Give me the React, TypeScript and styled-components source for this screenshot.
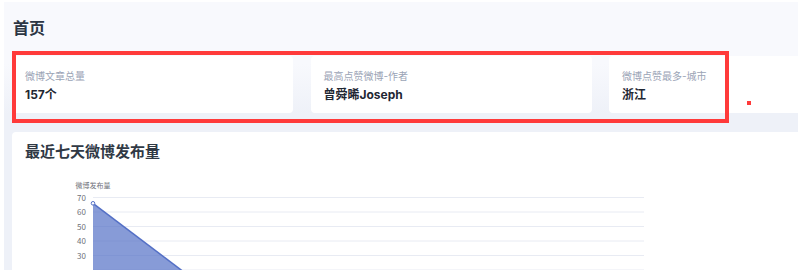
import styled, { createGlobalStyle } from 'styled-components';

const GlobalStyle = createGlobalStyle`
	html, body {
		margin: 0;
		padding: 0;
		background: #fff;
	}
	body {
		font-family: "Inter", "Noto Sans CJK SC", sans-serif;
		overflow: hidden;
	}
`;

const Page = styled.div`
	position: relative;
	width: 809px;
	height: 270px;
	padding: 2px 11px 0 4px;
	box-sizing: border-box;
	overflow: hidden;
`;

const Main = styled.main`
	height: 100%;
	padding: 14px 0 0 8px;
	box-sizing: border-box;
	overflow: hidden;
	background: linear-gradient(180deg, #f8f9fd 0, #f8f9fd 62px, #eef1f8 112px, #eef1f8 100%);
`;

const PageTitle = styled.h1`
	margin: 0 0 16px 1px;
	font-size: 16px;
	line-height: 24px;
	font-weight: 700;
	color: #2c3644;
`;

const StatRow = styled.div`
	display: grid;
	grid-template-columns: repeat(3, 281px);
	column-gap: 17.5px;
	margin-bottom: 19px;
`;

const StatCard = styled.div`
	background: #fff;
	border-radius: 4px;
	padding: 12px 13px 9px;
	height: 57px;
	box-sizing: border-box;
`;

const StatLabel = styled.div`
	font-size: 10px;
	line-height: 16px;
	color: #9ba4b6;
	margin-bottom: 2px;
`;

const StatValue = styled.div`
	font-size: 12px;
	line-height: 18px;
	font-weight: 700;
	color: #1f2733;
`;

const ChartCard = styled.section`
	background: #fff;
	border-radius: 4px 0 0 0;
	padding: 10px 13px 0;
	height: 200px;
	box-sizing: border-box;
`;

const ChartTitle = styled.h2`
	margin: 0;
	font-size: 15px;
	line-height: 20px;
	font-weight: 700;
	color: #303945;
`;

const ChartSvg = styled.svg`
	display: block;
	font-family: "Noto Sans CJK SC", sans-serif;
`;

const Highlight = styled.div`
	position: absolute;
	left: 12px;
	top: 51px;
	width: 717px;
	height: 72px;
	border: 4px solid #ff3a3a;
	box-sizing: border-box;
	pointer-events: none;
`;

const Dot = styled.div`
	position: absolute;
	left: 747px;
	top: 101px;
	width: 4px;
	height: 4px;
	background: #ff3a3a;
`;

const stats = [
	{ label: '微博文章总量', value: '157个' },
	{ label: '最高点赞微博-作者', value: '曾舜晞Joseph' },
	{ label: '微博点赞最多-城市', value: '浙江' },
];

// chart geometry, relative to the svg origin
const X0 = 68;
const X1 = 619;
const TOP = 35.5;
const STEP = 14.5;
const ticks = [70, 60, 50, 40, 30];
const yOf = (v: number) => TOP + ((70 - v) / 10) * STEP;

const Chart = () => {
	const p0 = { x: X0, y: yOf(66) };
	const p1 = { x: X0 + 92, y: yOf(18) };
	const base = yOf(0);
	return (
		<ChartSvg width="760" height="150">
			<text x={X0} y="26" fontSize="7" fill="#6e7079" textAnchor="middle">
				微博发布量
			</text>
			{ticks.map((t) => (
				<g key={t}>
					<line x1={X0} x2={X1} y1={yOf(t)} y2={yOf(t)} stroke="#e8ebf3" strokeWidth="1" />
					<text x={X0 - 7} y={yOf(t) + 3} fontSize="8" fill="#6e7079" textAnchor="end">
						{t}
					</text>
				</g>
			))}
			<line x1={X0} x2={X1} y1={yOf(20)} y2={yOf(20)} stroke="#e8ebf3" strokeWidth="1" />
			<polygon
				points={`${p0.x},${p0.y} ${p1.x},${p1.y} ${p1.x},${base} ${p0.x},${base}`}
				fill="#5470c6"
				fillOpacity="0.7"
			/>
			<line x1={p0.x} y1={p0.y} x2={p1.x} y2={p1.y} stroke="#5470c6" strokeWidth="1.5" />
			<circle cx={p0.x} cy={p0.y} r="1.8" fill="#fff" stroke="#5470c6" strokeWidth="1" />
		</ChartSvg>
	);
};

const App = () => {
	return (
		<Page>
			<GlobalStyle />
			<Main>
				<PageTitle>首页</PageTitle>
				<StatRow>
					{stats.map((s) => (
						<StatCard key={s.label}>
							<StatLabel>{s.label}</StatLabel>
							<StatValue>{s.value}</StatValue>
						</StatCard>
					))}
				</StatRow>
				<ChartCard>
					<ChartTitle>最近七天微博发布量</ChartTitle>
					<Chart />
				</ChartCard>
			</Main>
			<Highlight />
			<Dot />
		</Page>
	);
};

export default App;
